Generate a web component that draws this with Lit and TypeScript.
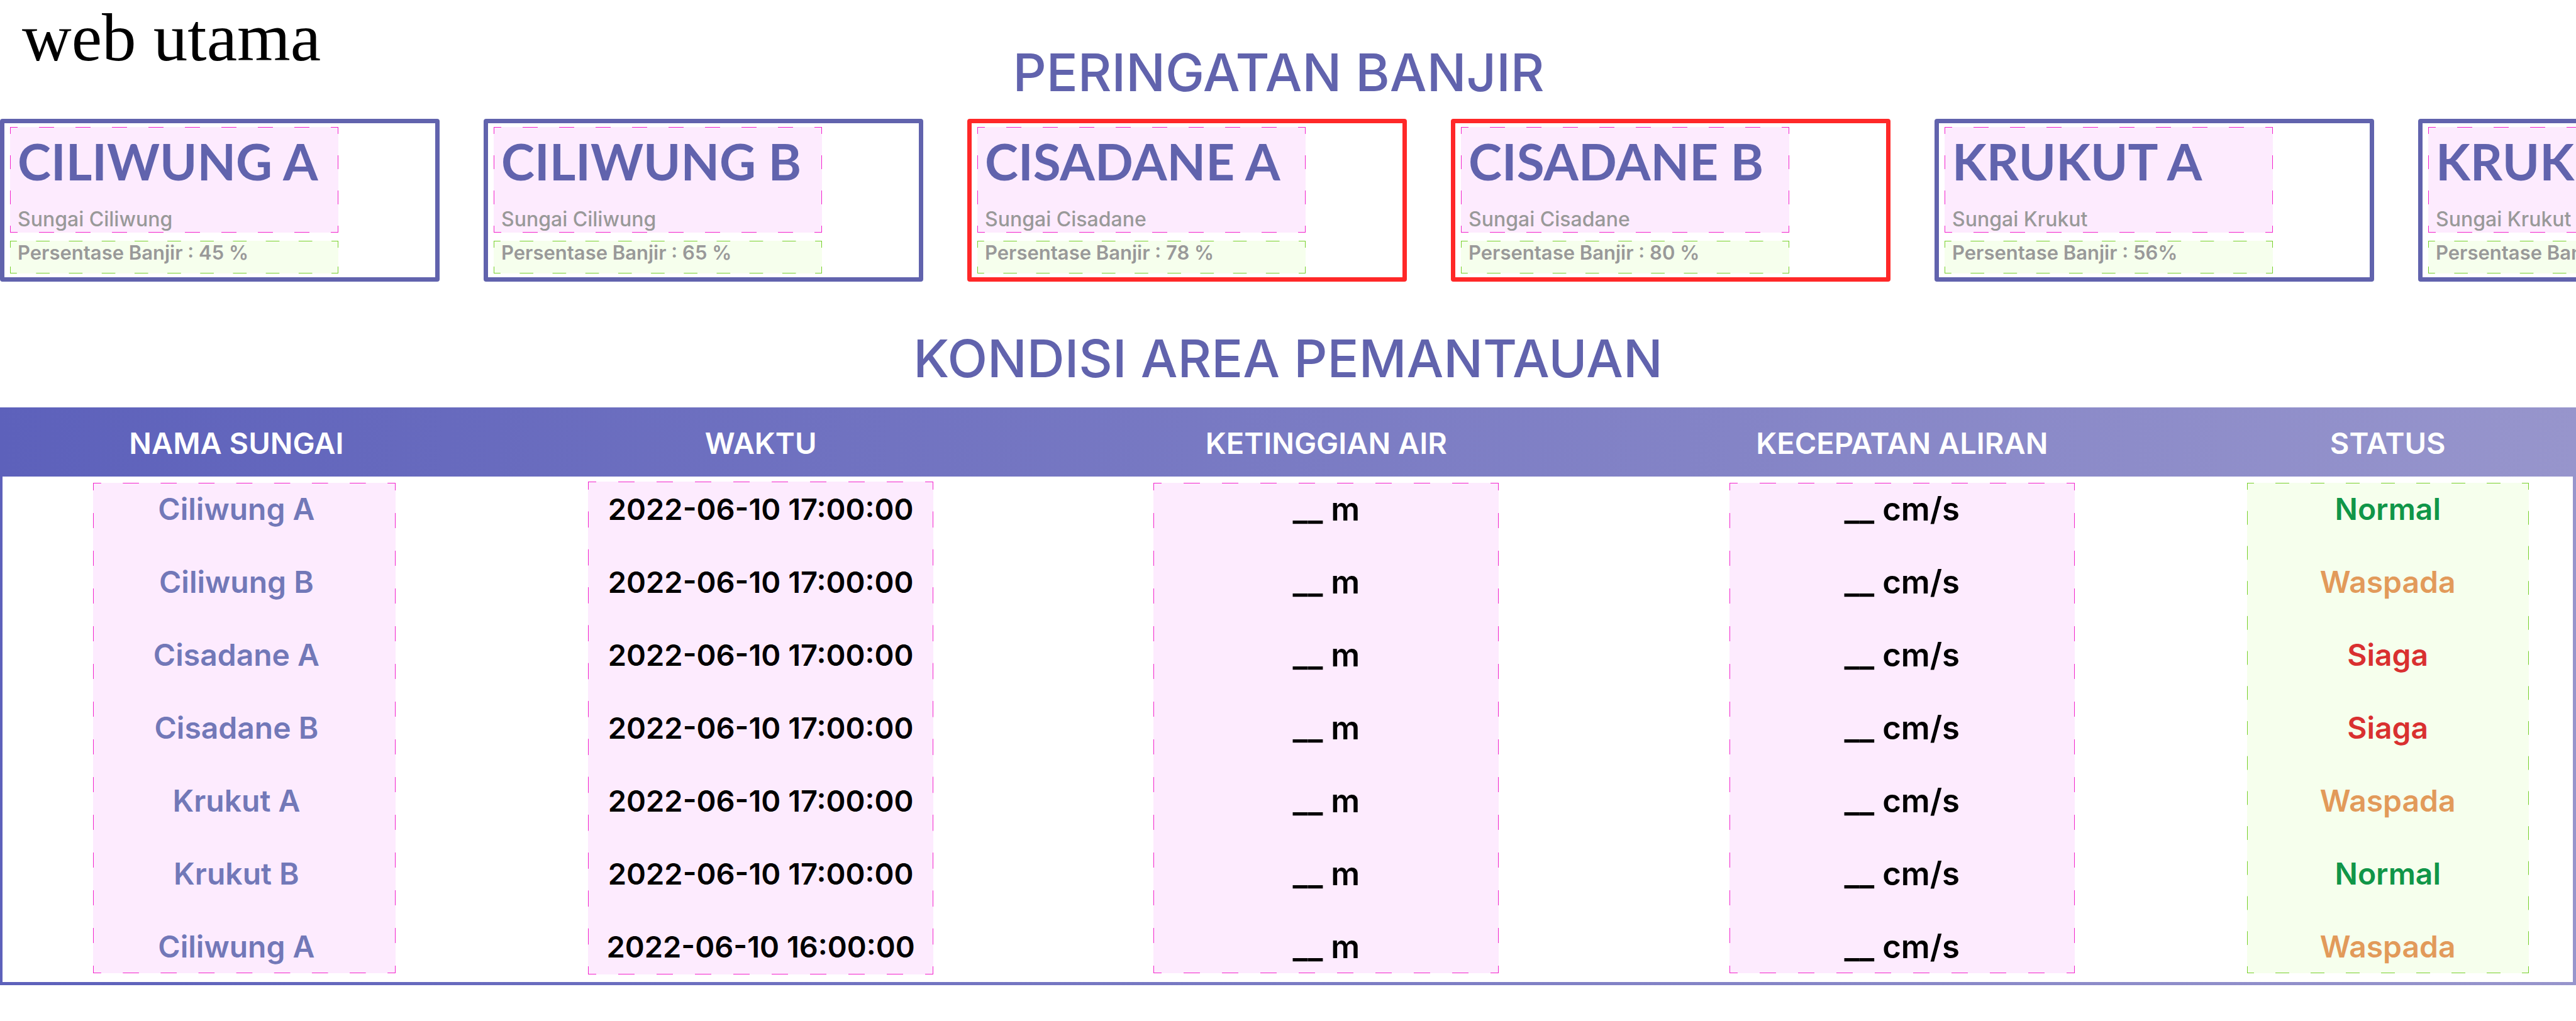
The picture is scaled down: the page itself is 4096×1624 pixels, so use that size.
import { LitElement, html, css } from "lit";
import { customElement, property } from "lit/decorators.js";
import { classMap } from "lit/directives/class-map.js";

interface Warning {
  area: string;
  river: string;
  percentage: string;
  alert?: boolean;
}

interface Reading {
  area: string;
  time: string;
  status: "Normal" | "Waspada" | "Siaga";
}

const WARNINGS: Warning[] = [
  { area: "CILIWUNG A", river: "Sungai Ciliwung", percentage: "45 %" },
  { area: "CILIWUNG B", river: "Sungai Ciliwung", percentage: "65 %" },
  { area: "CISADANE A", river: "Sungai Cisadane", percentage: "78 %", alert: true },
  { area: "CISADANE B", river: "Sungai Cisadane", percentage: "80 %", alert: true },
  { area: "KRUKUT A", river: "Sungai Krukut", percentage: "56%" },
  { area: "KRUKUT B", river: "Sungai Krukut", percentage: "40 %" },
];

const READINGS: Reading[] = [
  { area: "Ciliwung A", time: "2022-06-10 17:00:00", status: "Normal" },
  { area: "Ciliwung B", time: "2022-06-10 17:00:00", status: "Waspada" },
  { area: "Cisadane A", time: "2022-06-10 17:00:00", status: "Siaga" },
  { area: "Cisadane B", time: "2022-06-10 17:00:00", status: "Siaga" },
  { area: "Krukut A", time: "2022-06-10 17:00:00", status: "Waspada" },
  { area: "Krukut B", time: "2022-06-10 17:00:00", status: "Normal" },
  { area: "Ciliwung A", time: "2022-06-10 16:00:00", status: "Waspada" },
];

/* A tinted box whose dashes meet evenly at every corner. */
const dashedBox = css`
  .box {
    box-sizing: border-box;
    --dash-x: 58px;
    --dash-y: 60px;
    --row: linear-gradient(90deg, var(--line) 20.5%, transparent 20.5% 79.5%, var(--line) 79.5%);
    --column: linear-gradient(var(--line) 20.5%, transparent 20.5% 79.5%, var(--line) 79.5%);
    background:
      var(--row) left top / var(--dash-x) 1px round no-repeat,
      var(--row) left bottom / var(--dash-x) 1px round no-repeat,
      var(--column) left top / 1px var(--dash-y) no-repeat round,
      var(--column) right top / 1px var(--dash-y) no-repeat round,
      var(--fill);
  }
  .pink {
    --line: #f222cc;
    --fill: #fdebfe;
  }
  .green {
    --line: #77d02a;
    --fill: #f6ffed;
  }
`;

@customElement("warning-card")
export class WarningCard extends LitElement {
  @property({ attribute: false }) warning!: Warning;

  static styles = [
    dashedBox,
    css`
      :host {
        display: block;
        flex: 0 0 699px;
      }
      .card {
        display: flex;
        flex-direction: column;
        gap: 13px;
        box-sizing: border-box;
        padding: 6px 154px 6px 9px;
        border: 7px solid #6163ad;
        border-radius: 4px;
      }
      .alert {
        border-color: #ff2828;
      }
      .place {
        --dash-y: 56px;
        padding: 6px 12px 2px;
      }
      .level {
        --dash-x: 52px;
        --dash-y: 52px;
        padding: 0 12px 14px;
      }
      h3 {
        margin: 0 0 26px;
        color: #6163ad;
        font: 700 80px/96px Lato, sans-serif;
        white-space: nowrap;
      }
      p {
        margin: 0;
        color: #999;
        font: 500 32px/38px Inter, sans-serif;
        white-space: nowrap;
      }
      .level p {
        font-size: 31px;
        font-weight: 600;
      }
    `,
  ];

  render() {
    const { area, river, percentage, alert } = this.warning;
    return html`
      <article class=${classMap({ card: true, alert: !!alert })}>
        <div class="box pink place">
          <h3>${area}</h3>
          <p>${river}</p>
        </div>
        <div class="box green level">
          <p>Persentase Banjir : ${percentage}</p>
        </div>
      </article>
    `;
  }
}

@customElement("monitoring-table")
export class MonitoringTable extends LitElement {
  @property({ attribute: false }) readings: Reading[] = [];

  static styles = [
    dashedBox,
    css`
      :host {
        display: block;
      }
      .board {
        display: grid;
        padding: 0 5px 5px 4px;
        background: linear-gradient(90deg, #5d61bb, #9795cc);
      }
      .marks,
      table {
        grid-area: 1 / 1;
      }
      .marks {
        display: grid;
        grid-template-columns: 18.2% 22.6% 21.4% 23.4% 14.4%;
        justify-items: center;
        box-sizing: border-box;
        margin-top: 110px;
        padding: 10px 0 14px;
        background: #fff;
      }
      .marks .box {
        --dash-y: 60px;
        width: 549px;
      }
      .marks .names {
        width: 481px;
        margin-left: 26px;
      }
      .marks .times {
        margin: -2px 0;
      }
      .marks .statuses {
        --dash-y: 56px;
        width: 448px;
      }
      table {
        width: 100%;
        table-layout: fixed;
        border-collapse: collapse;
        color: #000;
        font: 600 48px/60px Inter, sans-serif;
        text-align: center;
      }
      .col-name {
        width: 18.2%;
      }
      .col-time {
        width: 22.6%;
      }
      .col-height {
        width: 21.4%;
      }
      .col-flow {
        width: 23.4%;
      }
      .col-status {
        width: 14.4%;
      }
      th {
        padding: 27px 0 23px;
        color: #fff;
        font-size: 47px;
        font-weight: 600;
      }
      td {
        padding: 22px 0 34px;
      }
      tr:last-child td {
        padding-bottom: 26px;
      }
      .name {
        color: #7278b8;
      }
      .time {
        font-size: 47px;
      }
      .measure {
        font-size: 51px;
      }
      .normal {
        color: #109648;
      }
      .waspada {
        color: #e29a5a;
      }
      .siaga {
        color: #d93030;
      }
    `,
  ];

  render() {
    return html`
      <div class="board">
        <div class="marks" aria-hidden="true">
          <div class="box pink names"></div>
          <div class="box pink times"></div>
          <div class="box pink"></div>
          <div class="box pink"></div>
          <div class="box green statuses"></div>
        </div>
        <table>
          <colgroup>
            <col class="col-name" />
            <col class="col-time" />
            <col class="col-height" />
            <col class="col-flow" />
            <col class="col-status" />
          </colgroup>
          <thead>
            <tr>
              <th scope="col">NAMA SUNGAI</th>
              <th scope="col">WAKTU</th>
              <th scope="col">KETINGGIAN AIR</th>
              <th scope="col">KECEPATAN ALIRAN</th>
              <th scope="col">STATUS</th>
            </tr>
          </thead>
          <tbody>
            ${this.readings.map(
              (r) => html`
                <tr>
                  <td class="name">${r.area}</td>
                  <td class="time">${r.time}</td>
                  <td class="measure">__ m</td>
                  <td class="measure">__ cm/s</td>
                  <td class=${r.status.toLowerCase()}>${r.status}</td>
                </tr>
              `,
            )}
          </tbody>
        </table>
      </div>
    `;
  }
}

@customElement("app-root")
export class AppRoot extends LitElement {
  static styles = css`
    :host {
      display: block;
      min-height: 100vh;
      overflow: hidden;
      background: #fff;
    }
    header {
      display: grid;
      grid-template-columns: 1fr auto 1fr;
      align-items: start;
      padding: 0 30px 24px 0;
    }
    h1 {
      margin: 0;
      padding-left: 35px;
      color: #000;
      font: 400 109px/120px "Liberation Serif", serif;
    }
    h2 {
      margin: 0;
      color: #6163ad;
      font: 500 83px/100px Inter, sans-serif;
      text-align: center;
    }
    header h2 {
      margin-top: 65px;
    }
    .cards {
      display: flex;
      gap: 70px;
      overflow: hidden;
    }
    .monitoring h2 {
      padding: 72px 0 28px;
    }
  `;

  render() {
    return html`
      <header>
        <h1>web utama</h1>
        <h2 id="warnings">PERINGATAN BANJIR</h2>
      </header>
      <section class="cards" aria-labelledby="warnings">
        ${WARNINGS.map((w) => html`<warning-card .warning=${w}></warning-card>`)}
      </section>
      <section class="monitoring">
        <h2>KONDISI AREA PEMANTAUAN</h2>
        <monitoring-table .readings=${READINGS}></monitoring-table>
      </section>
    `;
  }
}
